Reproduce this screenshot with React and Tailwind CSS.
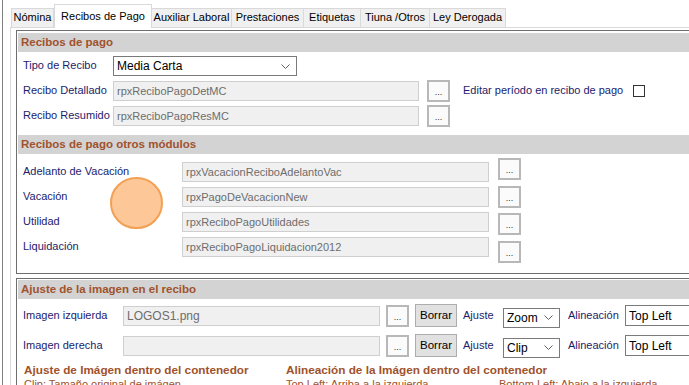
const tabs = [
  { label: 'Nómina', w: 'w-[43px]' },
  { label: 'Recibos de Pago', w: 'w-[98px]', active: true },
  { label: 'Auxiliar Laboral', w: 'w-[81px]' },
  { label: 'Prestaciones', w: 'w-[73px]' },
  { label: 'Etiquetas', w: 'w-[58px]' },
  { label: 'Tiuna /Otros', w: 'w-[70px]' },
  { label: 'Ley Derogada', w: 'w-[77px]' },
]

const otherModules = [
  { label: 'Adelanto de Vacación', value: 'rpxVacacionReciboAdelantoVac', btn: 'mt-0' },
  { label: 'Vacación', value: 'rpxPagoDeVacacionNew', btn: 'mt-[3px]' },
  { label: 'Utilidad', value: 'rpxReciboPagoUtilidades', btn: 'mt-[5px]' },
  { label: 'Liquidación', value: 'rpxReciboPagoLiquidacion2012', btn: 'mt-[8px]' },
]

function Chevron() {
  return (
    <svg width="9" height="5" viewBox="0 0 9 5" className="shrink-0">
      <polyline points="0.5,0.5 4.5,4.5 8.5,0.5" fill="none" stroke="#606060" strokeWidth="1" />
    </svg>
  )
}

function Field({ value, className }) {
  return (
    <div className={`h-[20px] bg-[#f0f0f0] border border-[#cfcfcf] pl-[3px] flex items-center text-[#6d6d6d] text-[11px] leading-none ${className}`}>
      {value}
    </div>
  )
}

function DotsButton({ className }) {
  return (
    <div className={`w-[23px] h-[22px] border-2 border-[#b8b8b8] bg-[#fbfbfb] flex items-end justify-center pb-[3px] text-[9px] leading-none text-[#333] ${className}`}>
      ...
    </div>
  )
}

function Header({ children, className }) {
  return (
    <div className={`mx-[1px] h-[19px] bg-[#d3d3d3] pl-[3px] flex items-center font-bold text-[11.5px] text-[#a0522d] ${className}`}>
      {children}
    </div>
  )
}

function Select({ value, className }) {
  return (
    <div className={`h-[20px] bg-white border border-[#7a7a7a] pl-[3px] pr-[6px] flex items-center justify-between text-[12px] text-black leading-none ${className}`}>
      <span>{value}</span>
      <Chevron />
    </div>
  )
}

function ImageRow({ label, value, fit, className }) {
  return (
    <div className={`h-[23px] flex items-center pl-[6px] ${className}`}>
      <div className="w-[100px] text-[#1c1c6c]">{label}</div>
      <Field value={value} className="w-[257px] text-[12px]" />
      <DotsButton className="ml-[6px]" />
      <div className="ml-[6px] w-[42px] h-[23px] bg-[#e1e1e1] border border-[#adadad] flex items-center justify-center text-black text-[11.5px]">Borrar</div>
      <div className="ml-[6px] w-[40px] text-[#1c1c6c]">Ajuste</div>
      <Select value={fit} className="w-[57px] mt-[4px]" />
      <div className="ml-[8px] w-[57px] text-[#1c1c6c]">Alineación</div>
      <div className="w-[80px] h-[21px] bg-white border border-[#7a7a7a] pl-[3px] flex items-center text-[12px] text-black leading-none">Top Left</div>
    </div>
  )
}

export default function App() {
  return (
    <div className="relative w-[689px] h-[385px] overflow-hidden bg-white font-['Liberation_Sans',Arial,sans-serif] text-[11px] leading-tight">
      <div className="ml-[2px] h-full border-l border-[#7f7f7f] flex flex-col">

        {/* Tabs */}
        <div className="h-[27px] flex items-end pl-[8px] shrink-0">
          {tabs.map(t => (
            <div
              key={t.label}
              className={
                t.active
                  ? `${t.w} h-[24px] -mb-px relative z-10 bg-white border-t border-l border-r border-[#d9d9d9] flex items-center justify-center text-black`
                  : `${t.w} h-[19px] bg-[#f0f0f0] border-t border-l border-r border-[#d9d9d9] -ml-px first:ml-0 flex items-center justify-center text-black`
              }
            >
              {t.label}
            </div>
          ))}
        </div>

        {/* Panel */}
        <div className="flex-1 ml-[7px] border-l border-t border-[#d9d9d9] pl-[5px] pt-[2px]">

          {/* Group 1 */}
          <div className="w-[700px] h-[244px] border border-[#6e6e6e]">
            <Header className="mt-[2px]">Recibos de pago</Header>

            <div className="h-[20px] mt-[4px] flex items-center pl-[6px]">
              <div className="w-[90px] text-[#1c1c6c]">Tipo de Recibo</div>
              <Select value="Media Carta" className="w-[184px]" />
            </div>

            <div className="h-[20px] mt-[5px] flex items-center pl-[6px]">
              <div className="w-[90px] text-[#1c1c6c]">Recibo Detallado</div>
              <Field value="rpxReciboPagoDetMC" className="w-[306px]" />
              <DotsButton className="ml-[8px]" />
              <div className="ml-[13px] text-[#1c1c6c]">Editar período en recibo de pago</div>
              <div className="ml-[10px] w-[12px] h-[12px] border border-[#333] bg-white" />
            </div>

            <div className="h-[20px] mt-[5px] flex items-center pl-[6px]">
              <div className="w-[90px] text-[#1c1c6c]">Recibo Resumido</div>
              <Field value="rpxReciboPagoResMC" className="w-[306px]" />
              <DotsButton className="ml-[8px]" />
            </div>

            <Header className="mt-[9px]">Recibos de pago otros módulos</Header>

            <div className="mt-[4px]">
              {otherModules.map(m => (
                <div key={m.label} className="h-[25px] flex items-start pl-[6px]">
                  <div className="w-[159px] mt-[7px] text-[#1c1c6c]">{m.label}</div>
                  <Field value={m.value} className="w-[307px] h-[19px] mt-[4px]" />
                  <DotsButton className={`ml-[9px] ${m.btn}`} />
                </div>
              ))}
            </div>
          </div>

          {/* Group 2 */}
          <div className="w-[700px] h-[120px] mt-[4px] border border-[#6e6e6e]">
            <Header className="mt-[1px] h-[18px]">Ajuste de la imagen en el recibo</Header>

            <ImageRow label="Imagen izquierda" value="LOGOS1.png" fit="Zoom" className="mt-[5px]" />
            <ImageRow label="Imagen derecha" value="" fit="Clip" className="mt-[7px]" />

            <div className="mt-[6px] pl-[7px] grid grid-cols-[262px_213px_200px] text-[#a0522d]">
              <div className="font-bold text-[11.75px]">Ajuste de Imágen dentro del contenedor</div>
              <div className="font-bold text-[11.75px] col-span-2">Alineación de la Imágen dentro del contenedor</div>
              <div>Clip: Tamaño original de imágen</div>
              <div>Top Left:  Arriba a la izquierda</div>
              <div>Bottom Left:  Abajo a la izquierda</div>
            </div>
          </div>
        </div>
      </div>

      {/* cursor highlight */}
      <div className="absolute left-[110px] top-[177px] w-[53px] h-[52px] rounded-full bg-[#fdc797] border-2 border-[#f2a154]" />
    </div>
  )
}
